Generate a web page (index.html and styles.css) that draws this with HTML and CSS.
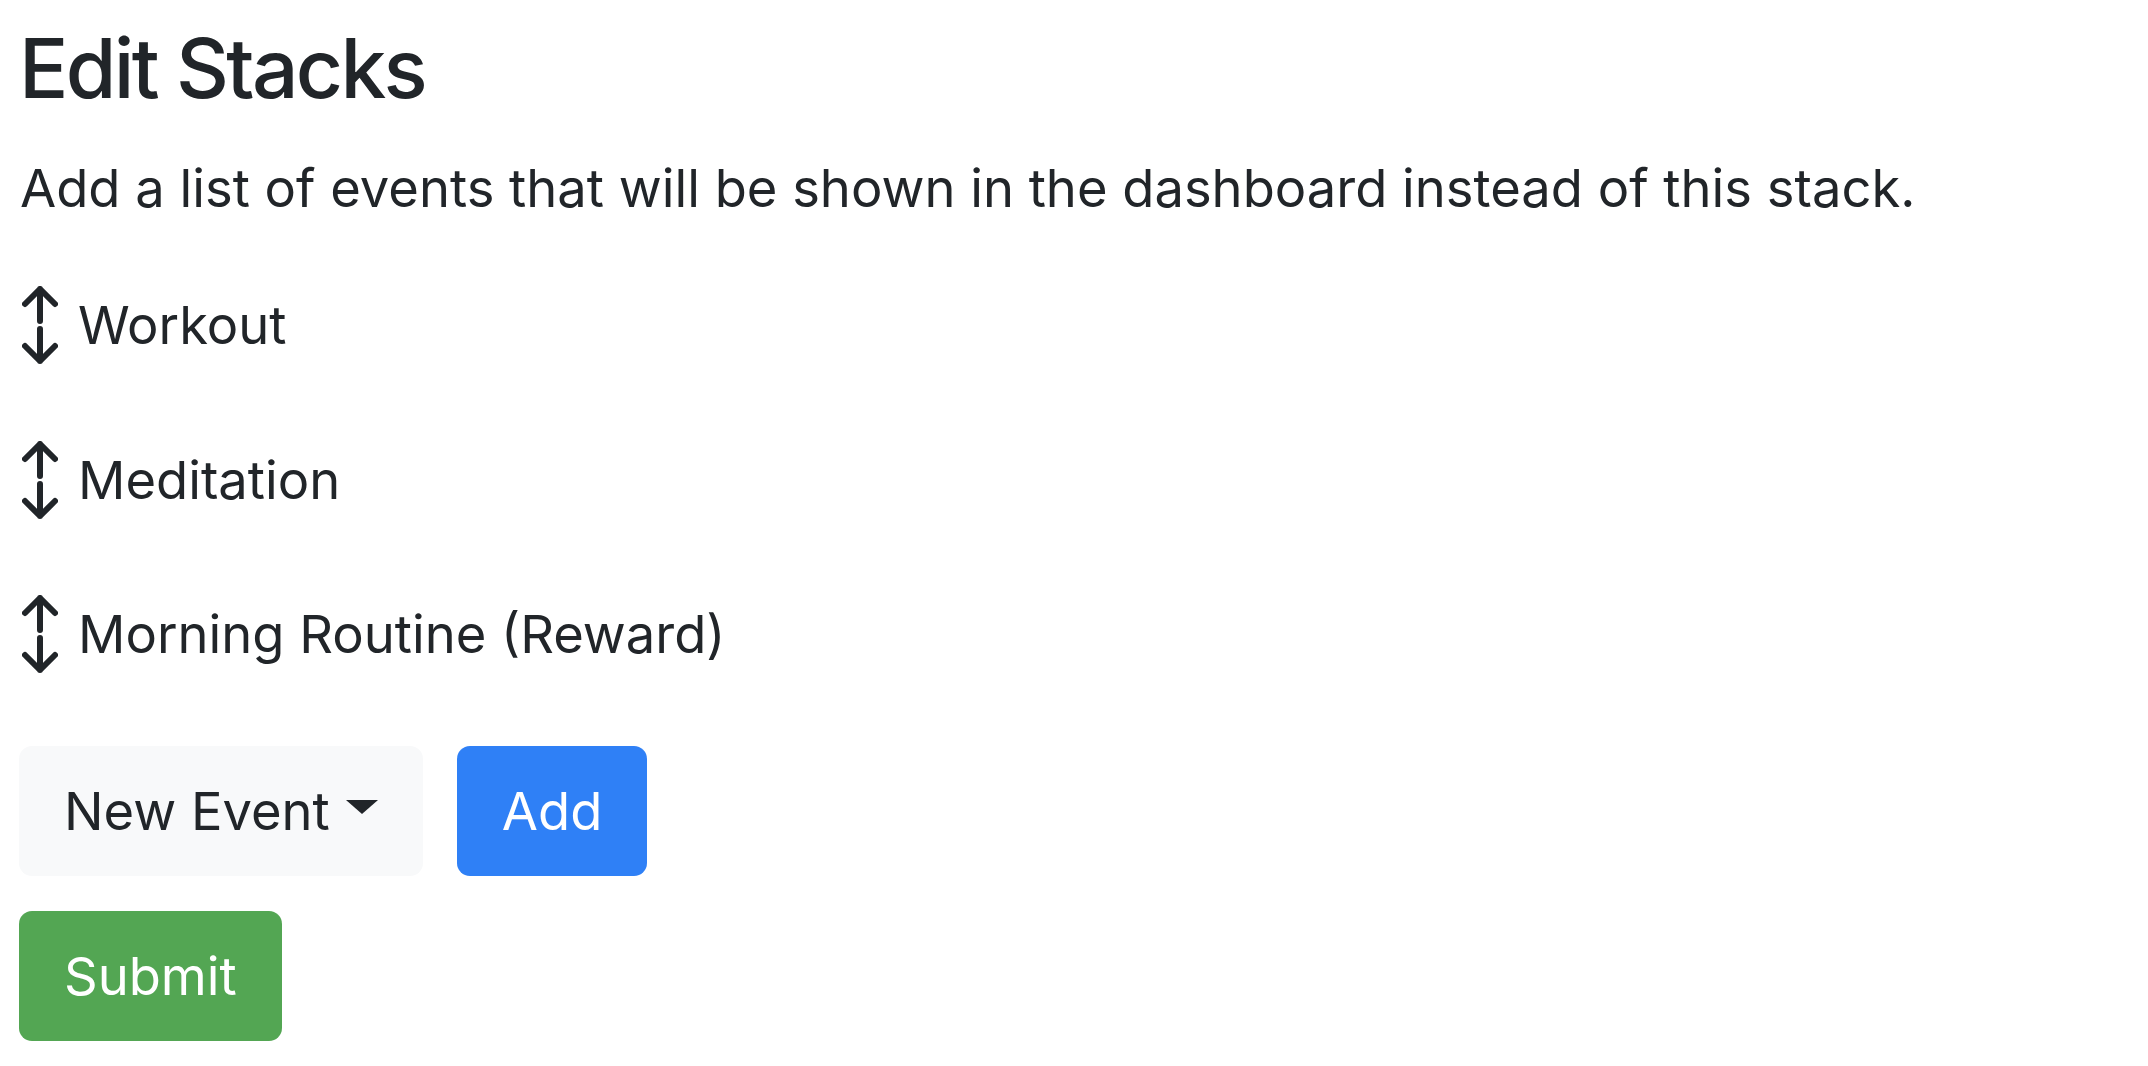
FILE: index.html
```html
<!DOCTYPE html>
<html>
<head>
<meta charset="utf-8">
<link rel="stylesheet" href="styles.css">
</head>
<body>
<main class="page">
  <h1 class="title">Edit Stacks</h1>
  <p class="lead">Add a list of events that will be shown in the dashboard instead of this stack.</p>
  <ul class="stack-list">
    <li class="stack-item">
      <svg class="grip" viewBox="0 0 36 78" width="36" height="78"><path d="M3 18 L18 3 L33 18 M18 3 V35 M18 43 V75 M3 60 L18 75 L33 60"/></svg>
      <span>Workout</span>
    </li>
    <li class="stack-item">
      <svg class="grip" viewBox="0 0 36 78" width="36" height="78"><path d="M3 18 L18 3 L33 18 M18 3 V35 M18 43 V75 M3 60 L18 75 L33 60"/></svg>
      <span>Meditation</span>
    </li>
    <li class="stack-item">
      <svg class="grip" viewBox="0 0 36 78" width="36" height="78"><path d="M3 18 L18 3 L33 18 M18 3 V35 M18 43 V75 M3 60 L18 75 L33 60"/></svg>
      <span>Morning Routine (Reward)</span>
    </li>
  </ul>
  <div class="add-row">
    <button class="btn btn-light">New Event<span class="caret"></span></button>
    <button class="btn btn-primary">Add</button>
  </div>
  <div class="submit-row">
    <button class="btn btn-success">Submit</button>
  </div>
</main>
</body>
</html>
```

FILE: styles.css
```css
html, body {
  margin: 0;
  padding: 0;
  background: #ffffff;
}
body {
  font-family: Inter, "Noto Sans", "Liberation Sans", sans-serif;
  color: #212529;
}
.page {
  display: flex;
  flex-direction: column;
  align-items: flex-start;
  padding: 21px 0 0 19px;
}
.title {
  margin: 0;
  font-size: 82px;
  line-height: 96px;
  font-weight: 500;
  letter-spacing: -2.7px;
}
.lead {
  margin: 33px 0 0 1px;
  font-size: 52.5px;
  line-height: 76px;
  font-weight: 400;
}
.stack-list {
  list-style: none;
  margin: 60px 0 0 0;
  padding: 0;
  display: flex;
  flex-direction: column;
  gap: 76.5px;
}
.stack-item {
  display: flex;
  align-items: center;
  height: 78px;
  font-size: 52.5px;
  line-height: 78px;
}
.grip {
  margin-left: 3px;
  margin-right: 20px;
  fill: none;
  stroke: #212529;
  stroke-width: 6;
  stroke-linecap: round;
  stroke-linejoin: round;
}
.add-row {
  display: flex;
  gap: 34px;
  margin-top: 72.6px;
}
.submit-row {
  margin-top: 35px;
}
.btn {
  font-family: inherit;
  font-size: 52.5px;
  line-height: 78px;
  height: 130px;
  border: none;
  border-radius: 13px;
  padding: 0 45px;
  display: inline-flex;
  align-items: center;
  cursor: pointer;
}
.btn-light {
  background: #f8f9fa;
  color: #212529;
}
.btn-primary {
  background: #2f80f6;
  color: #ffffff;
}
.btn-success {
  background: #53a653;
  color: #ffffff;
}
.caret {
  display: inline-block;
  width: 0;
  height: 0;
  margin-left: 16px;
  border-left: 16.5px solid transparent;
  border-right: 16.5px solid transparent;
  border-top: 14px solid #212529;
  transform: translateY(-4px);
}
```
